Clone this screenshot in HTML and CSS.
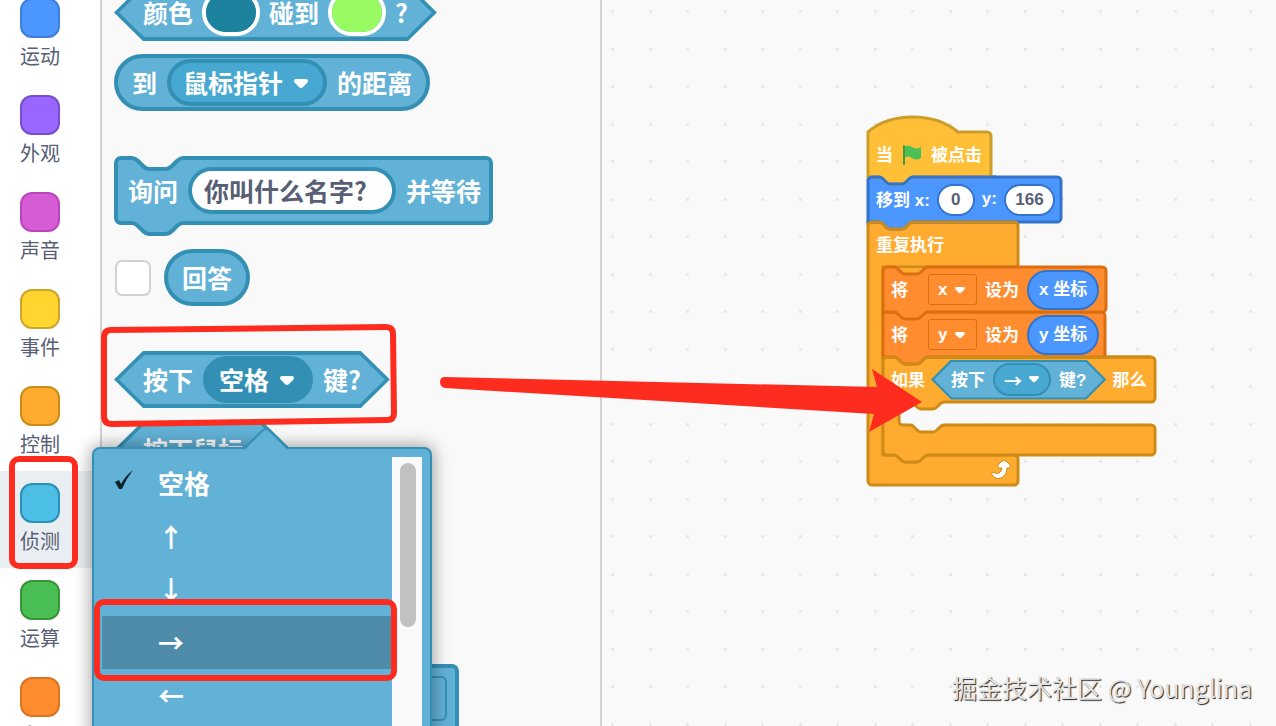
FILE: index.html
```html
<!DOCTYPE html>
<html lang="zh-CN">
  <head>
    <meta charset="UTF-8" />
    <meta name="viewport" content="width=device-width, initial-scale=1.0" />
    <title>Scratch</title>
    <link rel="stylesheet" href="styles.css">
  </head>
  <body>
    <div class="editor">
      <nav class="categories">
        <button class="category"><span class="dot motion"></span>运动</button>
        <button class="category"><span class="dot looks"></span>外观</button>
        <button class="category"><span class="dot sound"></span>声音</button>
        <button class="category"><span class="dot events"></span>事件</button>
        <button class="category"><span class="dot control"></span>控制</button>
        <button class="category selected"><span class="dot sensing"></span>侦测</button>
        <button class="category"><span class="dot operators"></span>运算</button>
        <button class="category"><span class="dot data"></span>变量</button>
      </nav>

      <section class="palette">
        <div class="group">
          <div class="block boolean touching">
            <span>颜色</span>
            <input class="color" type="color" value="#1d829e" aria-label="颜色" />
            <span>碰到</span>
            <input class="color" type="color" value="#99fb62" aria-label="碰到" />
            <span>?</span>
          </div>
          <div class="block reporter">
            <span>到</span>
            <span class="field">
              <select aria-label="到"><option>鼠标指针</option></select>
              <svg class="caret" viewBox="0 0 14 10"><path d="M2 0H12Q14 0 14 2Q14 3 13 4L9 8Q7 10 5 8L1 4Q0 3 0 2Q0 0 2 0Z" /></svg>
            </span>
            <span>的距离</span>
          </div>
        </div>

        <div class="group">
          <div class="block stack">
            <svg class="shape" width="380" height="81">
              <path d="M2 7a5 5 0 0 1 5 -5H18c3 0 4 1 6 3l5 5c1 1 3 3 6 3h17c3 0 4 -1 6 -3l5 -5c1 -1 3 -3 6 -3H372a5 5 0 0 1 5 5V62a5 5 0 0 1 -5 5H69c-3 0 -4 1 -6 3l-5 5c-1 1 -3 3 -6 3h-17c-3 0 -4 -1 -6 -3l-5 -5c-1 -1 -3 -3 -6 -3H7a5 5 0 0 1 -5 -5Z" />
            </svg>
            <span>询问</span>
            <input class="text" type="text" value="你叫什么名字?" aria-label="询问" />
            <span>并等待</span>
          </div>
          <div class="monitor">
            <input class="check" type="checkbox" aria-label="回答" />
            <div class="block reporter"><span>回答</span></div>
          </div>
        </div>

        <div class="group">
          <div class="block boolean">
            <span>按下</span>
            <span class="field open">
              <select aria-label="按下"><option>空格</option></select>
              <svg class="caret" viewBox="0 0 14 10"><path d="M2 0H12Q14 0 14 2Q14 3 13 4L9 8Q7 10 5 8L1 4Q0 3 0 2Q0 0 2 0Z" /></svg>
            </span>
            <span>键?</span>
          </div>
          <div class="block boolean mouse"><span>按下鼠标</span></div>
        </div>

        <div class="group drag">
          <svg class="drag-block" width="346" height="81">
            <path d="M2 7a5 5 0 0 1 5 -5H18c3 0 4 1 6 3l5 5c1 1 3 3 6 3h17c3 0 4 -1 6 -3l5 -5c1 -1 3 -3 6 -3H338a5 5 0 0 1 5 5V62a5 5 0 0 1 -5 5H7a5 5 0 0 1 -5 -5Z" />
            <rect class="slot" x="200" y="13" width="132" height="43" rx="5" />
          </svg>
        </div>
      </section>

      <main class="workspace">
        <div class="script">
          <svg class="shapes" width="292" height="374">
            <path class="control" d="M2 108H148a4 4 0 0 1 4 4V153H17V341H28c2 0 3 1 4 2l3 3c1 1 2 2 4 2h12c2 0 3 -1 4 -2l3 -3c1 -1 2 -2 4 -2H148a4 4 0 0 1 4 4V367a4 4 0 0 1 -4 4H6a4 4 0 0 1 -4 -4Z" />
            <path class="motion" d="M2 67a4 4 0 0 1 4 -4H191a4 4 0 0 1 4 4V104a4 4 0 0 1 -4 4H47c-2 0 -3 1 -4 2l-3 3c-1 1 -2 2 -4 2h-12c-2 0 -3 -1 -4 -2l-3 -3c-1 -1 -2 -2 -4 -2H2Z" />
            <path class="events" d="M2 18c23 -20 66 -20 90 0H121a4 4 0 0 1 4 4V63H47c-2 0 -3 1 -4 2l-3 3c-1 1 -2 2 -4 2h-12c-2 0 -3 -1 -4 -2l-3 -3c-1 -1 -2 -2 -4 -2H2Z" />
            <path class="motion line" d="M2 67a4 4 0 0 1 4 -4H13c2 0 3 1 4 2l3 3c1 1 2 2 4 2h12c2 0 3 -1 4 -2l3 -3c1 -1 2 -2 4 -2H130" />
            <path class="control line" d="M2 112a4 4 0 0 1 4 -4H13c2 0 3 1 4 2l3 3c1 1 2 2 4 2h12c2 0 3 -1 4 -2l3 -3c1 -1 2 -2 4 -2H148a4 4 0 0 1 4 4" />
            <path class="control" d="M17 247a4 4 0 0 1 4 -4H285a4 4 0 0 1 4 4V284a4 4 0 0 1 -4 4H78c-2 0 -3 1 -4 2l-3 3c-1 1 -2 2 -4 2h-12c-2 0 -3 -1 -4 -2l-3 -3c-1 -1 -2 -2 -4 -2H37a4 4 0 0 0 -4 4V307a4 4 0 0 0 4 4H44c2 0 3 1 4 2l3 3c1 1 2 2 4 2h12c2 0 3 -1 4 -2l3 -3c1 -1 2 -2 4 -2H285a4 4 0 0 1 4 4V337a4 4 0 0 1 -4 4H62c-2 0 -3 1 -4 2l-3 3c-1 1 -2 2 -4 2h-12c-2 0 -3 -1 -4 -2l-3 -3c-1 -1 -2 -2 -4 -2H21a4 4 0 0 1 -4 -4Z" />
            <path class="data" d="M17 198H235a4 4 0 0 1 4 4V243H62c-2 0 -3 1 -4 2l-3 3c-1 1 -2 2 -4 2h-12c-2 0 -3 -1 -4 -2l-3 -3c-1 -1 -2 -2 -4 -2H17Z" />
            <path class="control line" d="M17 247a4 4 0 0 1 4 -4H28c2 0 3 1 4 2l3 3c1 1 2 2 4 2h12c2 0 3 -1 4 -2l3 -3c1 -1 2 -2 4 -2H285" />
            <path class="control fill" d="M18 154H62V162H18Z" />
            <path class="data" d="M17 157a4 4 0 0 1 4 -4H28c2 0 3 1 4 2l3 3c1 1 2 2 4 2h12c2 0 3 -1 4 -2l3 -3c1 -1 2 -2 4 -2H236a4 4 0 0 1 4 4V194a4 4 0 0 1 -4 4H62c-2 0 -3 1 -4 2l-3 3c-1 1 -2 2 -4 2h-12c-2 0 -3 -1 -4 -2l-3 -3c-1 -1 -2 -2 -4 -2H17Z" />
            <path class="loop" d="M127 358Q132 361 134 358Q136 357 136 354H133Q131 353 132 351L136 347Q138 346 140 347L144 351Q145 353 143 354H141Q141 360 137 363Q131 367 126 361Q125 358 127 358Z" />
          </svg>

          <div class="row hat">
            <span>当</span>
            <svg class="flag" width="20" height="20" viewBox="0 0 20 20">
              <path d="M2 2Q6 -1 10 2T19 2V13Q14 16 10 13T2 13Z" />
              <path class="pole" d="M2 1V19" />
            </svg>
            <span>被点击</span>
          </div>
          <div class="row move">
            <label for="x">移到 x:</label>
            <input id="x" class="number" type="text" value="0" />
            <label for="y">y:</label>
            <input id="y" class="number wide" type="text" value="166" />
          </div>
          <div class="row"><span>重复执行</span></div>
          <div class="row inner">
            <span>将</span>
            <span class="field variable">
              <select aria-label="变量"><option>x</option></select>
              <svg class="caret" viewBox="0 0 14 10"><path d="M2 0H12Q14 0 14 2Q14 3 13 4L9 8Q7 10 5 8L1 4Q0 3 0 2Q0 0 2 0Z" /></svg>
            </span>
            <span>设为</span>
            <span class="position">x 坐标</span>
          </div>
          <div class="row inner">
            <span>将</span>
            <span class="field variable">
              <select aria-label="变量"><option>y</option></select>
              <svg class="caret" viewBox="0 0 14 10"><path d="M2 0H12Q14 0 14 2Q14 3 13 4L9 8Q7 10 5 8L1 4Q0 3 0 2Q0 0 2 0Z" /></svg>
            </span>
            <span>设为</span>
            <span class="position">y 坐标</span>
          </div>
          <div class="row inner if">
            <span>如果</span>
            <div class="block boolean small">
              <span>按下</span>
              <span class="field">
                <select aria-label="按下"><option>→</option></select>
                <svg class="caret" viewBox="0 0 14 10"><path d="M2 0H12Q14 0 14 2Q14 3 13 4L9 8Q7 10 5 8L1 4Q0 3 0 2Q0 0 2 0Z" /></svg>
              </span>
              <span>键?</span>
            </div>
            <span>那么</span>
          </div>
        </div>
        <p class="watermark">掘金技术社区 @ Younglina</p>
      </main>

      <div class="menu">
        <svg class="menu-arrow" width="46" height="24" viewBox="0 0 46 24"><path d="M1 22L19 4Q23 0 27 4L45 22V24H1Z" /><path class="edge" d="M1 22L19 4Q23 0 27 4L45 22" /></svg>
        <div class="menu-list">
          <button class="menu-item">
            <svg class="tick" width="20" height="20" viewBox="0 0 20 20"><path d="M1 12L5 10L7 14Q12 5 19 0Q12 9 8 19H5Z" /></svg>
            空格
          </button>
          <button class="menu-item">↑</button>
          <button class="menu-item">↓</button>
          <button class="menu-item hover">→</button>
          <button class="menu-item">←</button>
        </div>
        <div class="scrollbar"><div class="thumb"></div></div>
      </div>

      <svg class="marks" width="1276" height="726">
        <path d="M111 330L386 327Q393 327 393 334L394 413Q394 420 387 420L112 424Q104 424 104 416V338Q104 330 111 330Z" />
        <rect x="12" y="459" width="63" height="107" rx="7" />
        <rect x="97" y="602" width="297" height="76" rx="7" />
        <path class="arrow" d="M445 377L877 387L872 369L922 402L869 432L874 414L445 388Q440 387 440 382Q440 377 445 377Z" />
      </svg>
    </div>
  </body>
</html>
```
FILE: styles.css
```css
html,
body {
  margin: 0;
  padding: 0;
}

body {
  font-family: "Liberation Sans", "Noto Sans CJK SC", sans-serif;
  overflow: hidden;
}

button,
input,
select {
  box-sizing: border-box;
  margin: 0;
  padding: 0;
  border: 0;
  font: inherit;
  color: inherit;
  background: none;
  appearance: none;
}

.editor {
  position: relative;
  display: flex;
  height: 100vh;
  overflow: hidden;
  background: #f9f9f9;
}

/* categories */

.categories {
  flex: none;
  width: 100px;
  height: 100%;
  border-right: 2px solid #d2d2d2;
  background: #fff;
}

.category {
  display: flex;
  flex-direction: column;
  align-items: center;
  gap: 2px;
  width: 100%;
  height: 97px;
  padding: 12px 20px 0 0;
  font-size: 20px;
  line-height: 34px;
  color: #575e75;
}

.category:first-child {
  margin-top: -14px;
}

.category.selected {
  background: #e9eef2;
}

.dot {
  box-sizing: border-box;
  width: 40px;
  height: 40px;
  border: 2px solid;
  border-radius: 12px;
}

.dot.motion { background: #4c97ff; border-color: #3c7fd8; }
.dot.looks { background: #9966ff; border-color: #774dcb; }
.dot.sound { background: #d65cd6; border-color: #bd42bd; }
.dot.events { background: #ffd530; border-color: #cca52a; }
.dot.control { background: #ffab30; border-color: #cf8b17; }
.dot.sensing { background: #4cbfe6; border-color: #2e8eb8; }
.dot.operators { background: #48be54; border-color: #389438; }
.dot.data { background: #ff8c2e; border-color: #db7420; }

/* palette */

.palette {
  flex: none;
  box-sizing: border-box;
  width: 500px;
  padding-left: 12px;
  border-right: 2px solid #d2d2d2;
  font-family: "Noto Sans CJK SC", sans-serif;
}

.group {
  display: flex;
  flex-direction: column;
  align-items: flex-start;
  gap: 13px;
  margin-bottom: 45px;
}

.group:first-child {
  margin-top: -16px;
}

.block {
  position: relative;
  display: flex;
  align-items: center;
  gap: 10px;
  box-sizing: border-box;
  height: 57px;
  font-size: 25px;
  font-weight: 700;
  white-space: nowrap;
  color: #fff;
}

.reporter {
  padding: 0 14px;
  border: 4px solid #348fb5;
  border-radius: 29px;
  background: #62b1d6;
}

.boolean {
  isolation: isolate;
  padding: 0 29px;
}

.boolean::before,
.boolean::after {
  content: "";
  position: absolute;
  inset: 0;
  z-index: -1;
  background: #348fb5;
  clip-path: polygon(29px 0, calc(100% - 29px) 0, 100% 50%, calc(100% - 29px) 100%, 29px 100%, 0 50%);
}

.boolean::after {
  inset: 4px 5px;
  background: #62b1d6;
  clip-path: polygon(25px 0, calc(100% - 25px) 0, 100% 50%, calc(100% - 25px) 100%, 25px 100%, 0 50%);
}

.touching {
  gap: 9px;
}

.mouse {
  min-width: 177px;
}

.stack {
  isolation: isolate;
  width: 380px;
  height: 81px;
  margin-bottom: -1px;
  padding: 0 14px 12px;
}

.shape {
  position: absolute;
  inset: 0;
  z-index: -1;
}

.shape path,
.drag-block path {
  fill: #62b1d6;
  stroke: #348fb5;
  stroke-width: 4;
}

.slot {
  fill: #62b1d6;
  stroke: #348fb5;
  stroke-width: 2;
}

.drag {
  margin-top: 186px;
}

.color {
  width: 58px;
  height: 47px;
  border: 4px solid #fff;
  border-radius: 24px;
  overflow: hidden;
}

.color::-webkit-color-swatch-wrapper {
  padding: 0;
}

.color::-webkit-color-swatch {
  border: 0;
}

.text {
  width: 208px;
  height: 47px;
  padding: 0 0 2px 12px;
  border: 4px solid #348fb5;
  border-radius: 24px;
  background: #fff;
  color: #575e75;
}

.field {
  position: relative;
  display: flex;
}

.field select {
  height: 47px;
  padding: 0 39px 1px 12px;
  border: 4px solid #348fb5;
  border-radius: 24px;
  background: #47a8d1;
}

.field.open select {
  background: #348fb5;
}

.caret {
  position: absolute;
  top: 20px;
  right: 19px;
  width: 14px;
  height: 10px;
  fill: #fff;
  pointer-events: none;
}

.monitor {
  display: flex;
  align-items: center;
  gap: 13px;
  padding-left: 1px;
}

.check {
  width: 36px;
  height: 36px;
  border: 2px solid #d2d2d2;
  border-radius: 7px;
  background: #fff;
}

/* lifts the words to the optical middle of their block */
.block > span:not(.field),
.row > span:not(.field, .position),
.row label {
  padding-bottom: 2px;
}

/* workspace */

.workspace {
  position: relative;
  flex: 1;
  background-image: radial-gradient(circle, #e6e6e6 1px, transparent 2px), radial-gradient(circle, #e6e6e6 1px, transparent 2px),
    radial-gradient(circle, #e6e6e6 1px, transparent 2px), radial-gradient(circle, #e6e6e6 1px, transparent 2px);
  background-size: 75px 75px;
  background-position: -27px -26px, 11px -26px, -27px 12px, 11px 12px;
}

.script {
  position: absolute;
  left: 264px;
  top: 114px;
  isolation: isolate;
  font-size: 17px;
  font-weight: 700;
  white-space: nowrap;
  color: #fff;
}

.shapes {
  position: absolute;
  left: 0;
  top: 0;
  z-index: -1;
}

.shapes path { stroke-width: 3; }
.shapes .events { fill: #ffbf36; stroke: #cc9d2a; }
.shapes .motion { fill: #4c97ff; stroke: #3373cc; }
.shapes .control { fill: #ffab30; stroke: #cf8b17; }
.shapes .data { fill: #ff8c2e; stroke: #db6e10; }
.shapes .line { fill: none; }
.shapes .fill { stroke: none; }
.shapes .loop { fill: #fff; stroke: #cf8b17; stroke-width: 1; }

.row {
  display: flex;
  align-items: center;
  gap: 8px;
  height: 45px;
  padding-left: 10px;
}

.row.hat {
  gap: 9px;
  padding-top: 18px;
}

.row.move {
  gap: 7px;
}

.row.inner {
  padding-left: 25px;
}

.row.if {
  gap: 6px;
}

.flag {
  fill: #4cbf56;
}

.flag .pole {
  stroke: #45993d;
  stroke-width: 2;
  stroke-linecap: round;
}

.number {
  width: 38px;
  height: 32px;
  border: 2px solid #3373cc;
  border-radius: 16px;
  text-align: center;
  background: #fff;
  color: #575e75;
}

.number.wide {
  width: 51px;
}

.variable {
  margin-left: 12px;
}

.variable select {
  width: 49px;
  height: 31px;
  padding: 0 0 0 9px;
  border: 1px solid #db6e10;
  border-radius: 3px;
  background: none;
}

.script .caret {
  top: 13px;
  right: 12px;
  width: 10px;
  height: 7px;
}

.position {
  box-sizing: border-box;
  height: 40px;
  padding: 0 10px;
  border: 2px solid #3373cc;
  border-radius: 20px;
  line-height: 36px;
  background: #4c97ff;
}

.small {
  height: 40px;
  gap: 8px;
  padding: 0 20px;
  font-size: 17px;
}

.small::before {
  clip-path: polygon(20px 0, calc(100% - 20px) 0, 100% 50%, calc(100% - 20px) 100%, 20px 100%, 0 50%);
}

.small::after {
  inset: 2px 3px;
  clip-path: polygon(18px 0, calc(100% - 18px) 0, 100% 50%, calc(100% - 18px) 100%, 18px 100%, 0 50%);
}

.small .field select {
  width: 58px;
  height: 33px;
  padding: 0 0 0 9px;
  border-width: 2px;
  font-family: "Noto Sans CJK SC", sans-serif;
  font-size: 18px;
}

.watermark {
  position: absolute;
  right: 24px;
  bottom: 20px;
  margin: 0;
  font-family: "Noto Sans CJK SC", sans-serif;
  font-size: 25px;
  line-height: 38px;
  white-space: nowrap;
  color: #e4e4e4;
  text-shadow: 1px 1px 1px #222;
}

/* key menu */

.menu {
  position: absolute;
  left: 92px;
  top: 447px;
  bottom: -40px;
  display: flex;
  box-sizing: border-box;
  width: 340px;
  padding: 8px;
  border: 2px solid #348fb5;
  border-radius: 8px;
  background: #62b1d6;
  box-shadow: 0 0 16px 2px rgba(0, 0, 0, 0.35);
}

.menu-arrow {
  position: absolute;
  left: 149px;
  top: -22px;
  fill: #62b1d6;
}

.menu-arrow .edge {
  fill: none;
  stroke: #348fb5;
  stroke-width: 2;
}

.menu-list {
  flex: 1;
}

.menu-item {
  position: relative;
  display: block;
  width: 100%;
  height: 53px;
  padding: 0 0 3px 56px;
  font-family: "Noto Sans CJK SC", sans-serif;
  font-size: 26px;
  font-weight: 700;
  text-align: left;
  color: #fff;
}

.menu-item.hover {
  background: #4d8ba8;
}

.tick {
  position: absolute;
  left: 12px;
  top: 13px;
  fill: #10242e;
}

.scrollbar {
  width: 30px;
  background: #fafafa;
}

.thumb {
  width: 16px;
  height: 164px;
  margin: 6px 8px;
  border-radius: 8px;
  background: #c1c1c1;
}

/* hand-drawn marks */

.marks {
  position: absolute;
  left: 0;
  top: 0;
  fill: none;
  stroke: #fe2c1e;
  stroke-width: 6;
  pointer-events: none;
}

.marks .arrow {
  fill: #fe2c1e;
  stroke: none;
}
```
